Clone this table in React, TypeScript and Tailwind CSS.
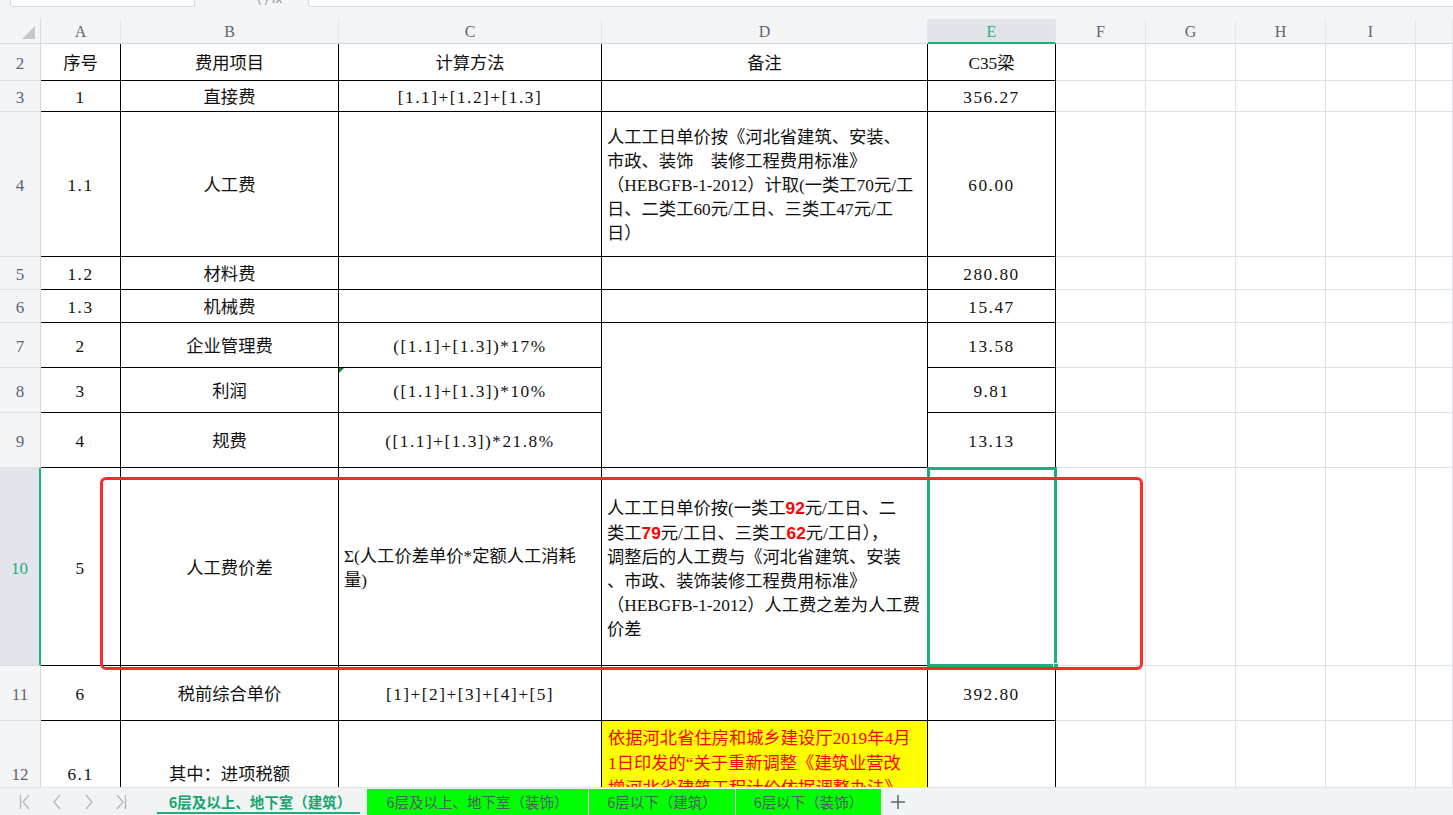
import React from "react";

const LIGHT = "border-r border-b border-[#dde1e8]";
const CC =
  "border-r border-b border-black flex items-center justify-center whitespace-nowrap pt-[4px]";
const NC =
  "border-r border-b border-black flex items-center justify-center whitespace-nowrap pt-[4px] tracking-[1.5px]";
const TB = "border-r border-b border-black";
const ML =
  "border-r border-b border-black flex flex-col justify-center pl-[5px] pt-[4px] leading-[24px] whitespace-nowrap";

function RH({ n, active }: { n: number; active?: boolean }) {
  return (
    <div
      className={
        active
          ? "flex items-center justify-center pt-[4px] bg-[#e3e5ea] border-b border-b-[#d9dde4] border-r-2 border-r-[#1eb07a] text-[#1eb07a] text-[17px]"
          : "flex items-center justify-center pt-[4px] bg-[#f4f5f7] border-b border-b-[#dde1e8] border-r border-r-[#d3d8e0] text-[#5f6673] text-[17px]"
      }
    >
      {n}
    </div>
  );
}

function Empties() {
  return (
    <>
      <div className={LIGHT} />
      <div className={LIGHT} />
      <div className={LIGHT} />
      <div className={LIGHT} />
      <div className={LIGHT} />
    </>
  );
}

function Red({ children }: { children: React.ReactNode }) {
  return (
    <span className="text-[#ff0000] font-bold font-['Liberation_Sans',sans-serif]">
      {children}
    </span>
  );
}

const COLS = ["A", "B", "C", "D", "E", "F", "G", "H", "I", ""];

function NavIcon({ kind }: { kind: "first" | "prev" | "next" | "last" }) {
  return (
    <svg width="12" height="16" viewBox="0 0 12 16" fill="none" stroke="#b3b8c1" strokeWidth="1.3">
      {kind === "first" && (
        <>
          <line x1="1.5" y1="1" x2="1.5" y2="15" />
          <polyline points="10,1 4,8 10,15" />
        </>
      )}
      {kind === "prev" && <polyline points="9,1 3,8 9,15" />}
      {kind === "next" && <polyline points="3,1 9,8 3,15" />}
      {kind === "last" && (
        <>
          <polyline points="2,1 8,8 2,15" />
          <line x1="10.5" y1="1" x2="10.5" y2="15" />
        </>
      )}
    </svg>
  );
}

export default function App() {
  return (
    <div className="relative h-[815px] w-[1453px] overflow-hidden bg-white flex flex-col font-['Liberation_Serif','Noto_Sans_CJK_SC',serif] text-[17.3px] text-[#111]">
      {/* formula bar remnants */}
      <div className="h-[19px] shrink-0 bg-[#f4f5f7] flex items-start">
        <div className="ml-[10px] w-[185px] h-[7px] bg-white border border-t-0 border-[#d6dae1] rounded-b-[3px]" />
        <div className="w-[113px] h-[7px] relative overflow-hidden">
          <span className="absolute left-[62px] -top-[9px] text-[13px] leading-[14px] text-[#8d939c] font-['Noto_Sans_CJK_SC',sans-serif]">
            ( ) fx
          </span>
        </div>
        <div className="flex-1 h-[7px] bg-white border border-t-0 border-r-0 border-[#d6dae1] rounded-bl-[3px]" />
      </div>

      {/* sheet grid */}
      <div className="relative flex-1 overflow-hidden">
        <div className="grid grid-cols-[41px_80px_218px_263px_326px_128px_90px_90px_90px_90px_1fr] grid-rows-[25px_37px_31px_145px_33px_33px_45px_45px_55px_198px_55px_104px]">
          {/* column header row */}
          <div className="relative bg-[#f4f5f7] border-b border-r border-[#d5dae2]">
            <svg className="absolute right-[5px] bottom-[4px]" width="13" height="13" viewBox="0 0 13 13">
              <polygon points="13,0 13,13 0,13" fill="#c3c7ce" />
            </svg>
          </div>
          {COLS.map((c, i) =>
            c === "E" ? (
              <div
                key={i}
                className="flex items-center justify-center pt-[2px] bg-[#e2e4e9] border-b-2 border-b-[#1eb07a] border-r border-r-[#e4e7ec] text-[16px] text-[#1eb07a]"
              >
                {c}
              </div>
            ) : (
              <div
                key={i}
                className="flex items-center justify-center pt-[2px] bg-[#f4f5f7] border-b border-b-[#d5dae2] border-r border-r-[#e4e7ec] text-[16px] text-[#5f6673]"
              >
                {c}
              </div>
            )
          )}

          {/* row 2 */}
          <RH n={2} />
          <div className={CC}>序号</div>
          <div className={CC}>费用项目</div>
          <div className={CC}>计算方法</div>
          <div className={CC}>备注</div>
          <div className={CC}>C35梁</div>
          <Empties />

          {/* row 3 */}
          <RH n={3} />
          <div className={NC}>1</div>
          <div className={CC}>直接费</div>
          <div className={NC}>[1.1]+[1.2]+[1.3]</div>
          <div className={TB} />
          <div className={NC}>356.27</div>
          <Empties />

          {/* row 4 */}
          <RH n={4} />
          <div className={NC}>1.1</div>
          <div className={CC}>人工费</div>
          <div className={TB} />
          <div className={ML}>
            <div>人工工日单价按《河北省建筑、安装、</div>
            <div>市政、装饰　装修工程费用标准》</div>
            <div>（HEBGFB-1-2012）计取(一类工70元/工</div>
            <div>日、二类工60元/工日、三类工47元/工</div>
            <div>日）</div>
          </div>
          <div className={NC}>60.00</div>
          <Empties />

          {/* row 5 */}
          <RH n={5} />
          <div className={NC}>1.2</div>
          <div className={CC}>材料费</div>
          <div className={TB} />
          <div className={TB} />
          <div className={NC}>280.80</div>
          <Empties />

          {/* row 6 */}
          <RH n={6} />
          <div className={NC}>1.3</div>
          <div className={CC}>机械费</div>
          <div className={TB} />
          <div className={TB} />
          <div className={NC}>15.47</div>
          <Empties />

          {/* row 7 */}
          <RH n={7} />
          <div className={NC}>2</div>
          <div className={CC}>企业管理费</div>
          <div className={NC}>([1.1]+[1.3])*17%</div>
          <div className="border-r border-b border-black row-span-3" />
          <div className={NC}>13.58</div>
          <Empties />

          {/* row 8 */}
          <RH n={8} />
          <div className={NC}>3</div>
          <div className={CC}>利润</div>
          <div className="relative border-r border-b border-black flex items-center justify-center whitespace-nowrap pt-[4px] tracking-[1.5px]">
            <svg className="absolute left-0 top-0" width="5" height="5" viewBox="0 0 5 5">
              <polygon points="0,0 5,0 0,5" fill="#1d7a36" />
            </svg>
            ([1.1]+[1.3])*10%
          </div>
          <div className={NC}>9.81</div>
          <Empties />

          {/* row 9 */}
          <RH n={9} />
          <div className={NC}>4</div>
          <div className={CC}>规费</div>
          <div className={NC}>([1.1]+[1.3])*21.8%</div>
          <div className={NC}>13.13</div>
          <Empties />

          {/* row 10 */}
          <RH n={10} active />
          <div className={NC}>5</div>
          <div className={CC}>人工费价差</div>
          <div className={ML}>
            <div>Σ(人工价差单价*定额人工消耗</div>
            <div>量)</div>
          </div>
          <div className={ML}>
            <div>
              人工工日单价按(一类工<Red>92</Red>元/工日、二
            </div>
            <div>
              类工<Red>79</Red>元/工日、三类工<Red>62</Red>元/工日），
            </div>
            <div>调整后的人工费与《河北省建筑、安装</div>
            <div>、市政、装饰装修工程费用标准》</div>
            <div>（HEBGFB-1-2012）人工费之差为人工费</div>
            <div>价差</div>
          </div>
          <div className="relative border-r border-b border-black">
            <div className="absolute -left-[1px] -top-[1px] -right-[2px] -bottom-[2px] border-[3px] border-[#1eb07a]" />
            <div className="absolute -right-[4px] -bottom-[4px] w-[6px] h-[6px] bg-[#1eb07a] border border-white" />
          </div>
          <Empties />

          {/* row 11 */}
          <RH n={11} />
          <div className={NC}>6</div>
          <div className={CC}>税前综合单价</div>
          <div className={NC}>[1]+[2]+[3]+[4]+[5]</div>
          <div className={TB} />
          <div className={NC}>392.80</div>
          <Empties />

          {/* row 12 */}
          <RH n={12} />
          <div className={NC}>6.1</div>
          <div className={CC}>其中：进项税额</div>
          <div className={TB} />
          <div className="border-r border-b border-black bg-[#ffff00] text-[#ff0000] pl-[6px] pt-[5px] leading-[25px] whitespace-nowrap overflow-hidden">
            <div>依据河北省住房和城乡建设厅2019年4月</div>
            <div>1日印发的“关于重新调整《建筑业营改</div>
            <div>增河北省建筑工程计价依据调整办法》</div>
          </div>
          <div className={TB} />
          <Empties />
        </div>
      </div>

      {/* sheet tabs */}
      <div className="h-[28px] shrink-0 bg-[#f2f3f5] border-t border-[#dfe2e7] flex items-end font-['Noto_Sans_CJK_SC',sans-serif] text-[14.5px] leading-[20px]">
        <div className="w-[155px] h-full flex items-center pl-[19px] gap-[20px]">
          <NavIcon kind="first" />
          <NavIcon kind="prev" />
          <NavIcon kind="next" />
          <NavIcon kind="last" />
        </div>
        <div className="relative w-[210px] h-[26px] flex items-center justify-center text-[#17a56e] font-semibold">
          6层及以上、地下室（建筑）
          <div className="absolute left-[2px] right-[5px] bottom-[1px] h-[2px] bg-[#1eb07a]" />
        </div>
        <div className="ml-[2px] w-[221px] h-[26px] bg-[#00ff00] flex items-center justify-center text-[#4f5a67]">
          6层及以上、地下室（装饰）
        </div>
        <div className="ml-px w-[146px] h-[26px] bg-[#00ff00] flex items-center justify-center text-[#4f5a67]">
          6层以下（建筑）
        </div>
        <div className="ml-px w-[145px] h-[26px] bg-[#00ff00] flex items-center justify-center text-[#4f5a67]">
          6层以下（装饰）
        </div>
        <div className="ml-[9px] h-full flex items-center">
          <svg width="16" height="16" viewBox="0 0 16 16" stroke="#555b63" strokeWidth="1.4">
            <line x1="8" y1="1" x2="8" y2="15" />
            <line x1="1" y1="8" x2="15" y2="8" />
          </svg>
        </div>
      </div>

      {/* red annotation box */}
      <div className="pointer-events-none absolute left-[100px] top-[477px] w-[1043px] h-[193px] border-[3px] border-[#ff2a2a] rounded-[6px]" />
    </div>
  );
}
